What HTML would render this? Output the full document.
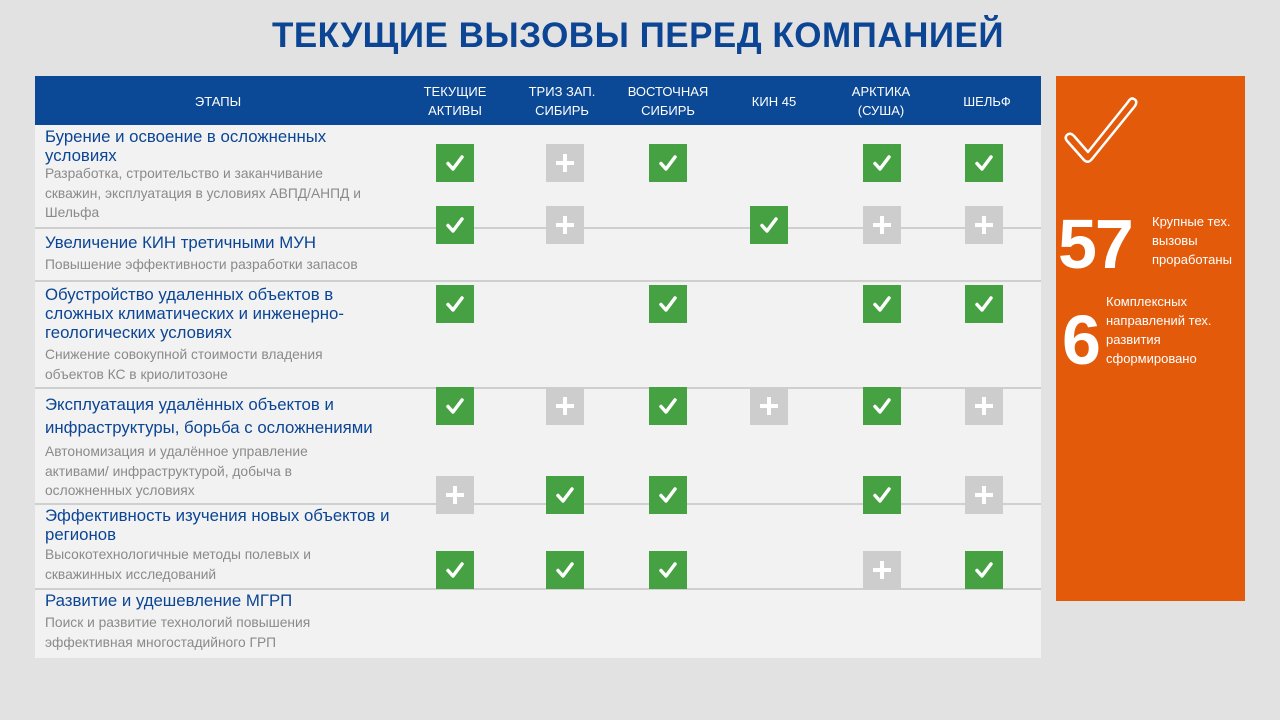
<!DOCTYPE html>
<html><head><meta charset="utf-8"><style>
*{margin:0;padding:0;box-sizing:border-box}
body{width:1280px;height:720px;background:#e2e2e2;position:relative;overflow:hidden;font-family:"Liberation Sans",sans-serif}
.a{position:absolute;white-space:nowrap}
h1{position:absolute;left:0;width:1276px;top:16px;text-align:center;font-size:35px;font-weight:bold;color:#0b4594;letter-spacing:0.5px}
.tb{position:absolute;left:35px;top:76px;width:1006px;height:582px;background:#f2f2f2}
.hd{position:absolute;left:35px;top:76px;width:1006px;height:49px;background:#0b4896}
.hc{position:absolute;color:#fff;font-size:13px;text-align:center;line-height:19px;transform:translateX(-50%)}
.ln{position:absolute;left:35px;width:1006px;height:2px;background:#cfcfcf}
.t{position:absolute;left:45px;color:#0b4594;font-size:16.8px;line-height:19px;white-space:nowrap}
.s{position:absolute;left:45px;color:#8a8a8a;font-size:13.8px;line-height:19.5px;white-space:nowrap}
.i{position:absolute;width:38px;height:38px}
.g{background:#45a142}.p{background:#cdcdcd}
.i svg{position:absolute;left:0;top:0}
.or{position:absolute;left:1056px;top:76px;width:189px;height:525px;background:#e35a0a;color:#fff}
</style></head><body>
<h1>ТЕКУЩИЕ ВЫЗОВЫ ПЕРЕД КОМПАНИЕЙ</h1>
<div class="tb"></div>
<div class="hd"></div>
<div class="hc" style="left:218px;top:92px">ЭТАПЫ</div>
<div class="hc" style="left:455px;top:82px">ТЕКУЩИЕ<br>АКТИВЫ</div>
<div class="hc" style="left:562px;top:82px">ТРИЗ ЗАП.<br>СИБИРЬ</div>
<div class="hc" style="left:668px;top:82px">ВОСТОЧНАЯ<br>СИБИРЬ</div>
<div class="hc" style="left:774px;top:92px">КИН 45</div>
<div class="hc" style="left:881px;top:82px">АРКТИКА<br>(СУША)</div>
<div class="hc" style="left:987px;top:92px">ШЕЛЬФ</div>
<div class="ln" style="top:227px"></div>
<div class="ln" style="top:280px"></div>
<div class="ln" style="top:387px"></div>
<div class="ln" style="top:503px"></div>
<div class="ln" style="top:588px"></div>

<div class="t" style="top:127px">Бурение и освоение в осложненных<br>условиях</div>
<div class="s" style="top:164px">Разработка, строительство и заканчивание<br>скважин, эксплуатация в условиях АВПД/АНПД и<br>Шельфа</div>
<div class="t" style="top:233px">Увеличение КИН третичными МУН</div>
<div class="s" style="top:255px">Повышение эффективности разработки запасов</div>
<div class="t" style="top:285px">Обустройство удаленных объектов в<br>сложных климатических и инженерно-<br>геологических условиях</div>
<div class="s" style="top:345px">Снижение совокупной стоимости владения<br>объектов КС в криолитозоне</div>
<div class="t" style="top:393px;line-height:23px">Эксплуатация удалённых объектов и<br>инфраструктуры, борьба с осложнениями</div>
<div class="s" style="top:442px">Автономизация и удалённое управление<br>активами/ инфраструктурой, добыча в<br>осложненных условиях</div>
<div class="t" style="top:506px">Эффективность изучения новых объектов и<br>регионов</div>
<div class="s" style="top:545px">Высокотехнологичные методы полевых и<br>скважинных исследований</div>
<div class="t" style="top:591px">Развитие и удешевление МГРП</div>
<div class="s" style="top:613px">Поиск и развитие технологий повышения<br>эффективная многостадийного ГРП</div>

<div id="ic"></div>
<script>
var C='<svg width="38" height="38"><path d="M12 19.5 L17 25 L26 13" fill="none" stroke="#fff" stroke-width="3.5" stroke-linecap="round" stroke-linejoin="round"/></svg>';
var P='<svg width="38" height="38"><path d="M19 10V28M10 19H28" stroke="#fff" stroke-width="4"/></svg>';
var xs=[455,565,668,769,882,984];
var rows=[[144,"c+c-cc"],[206,"c+-c++"],[285,"c-c-cc"],[387,"c+c+c+"],[476,"+cc-c+"],[551,"ccc-+c"]];
var h='';
rows.forEach(function(r){for(var k=0;k<6;k++){var ch=r[1][k];if(ch=='-')continue;h+='<div class="i '+(ch=='c'?'g':'p')+'" style="left:'+(xs[k]-19)+'px;top:'+r[0]+'px">'+(ch=='c'?C:P)+'</div>';}});
document.getElementById('ic').innerHTML=h;
</script>

<div class="or">
<svg class="a" style="left:4px;top:12px" width="80" height="80"><path d="M8 54 L24 72 Q28 76 32 71 L75 18 Q78 13 74 11 Q71 9 68 14 L28 64 L14 48 Q10 44 7 47 Q4 50 8 54 Z" fill="none" stroke="#fff" stroke-width="2.5" stroke-linejoin="round"/></svg>
<div class="a" style="left:2px;top:128px;font-size:70px;font-weight:bold;line-height:80px;letter-spacing:-2px">57</div>
<div class="a" style="left:96px;top:136px;font-size:13px;line-height:19px">Крупные тех.<br>вызовы<br>проработаны</div>
<div class="a" style="left:6px;top:224px;font-size:70px;font-weight:bold;line-height:80px">6</div>
<div class="a" style="left:50px;top:216px;font-size:13px;line-height:19px">Комплексных<br>направлений тех.<br>развития<br>сформировано</div>
</div>
</body></html>
